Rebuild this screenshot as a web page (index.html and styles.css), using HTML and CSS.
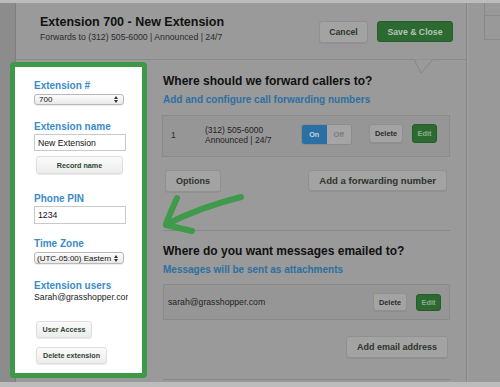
FILE: index.html
```html
<!DOCTYPE html>
<html>
<head>
<meta charset="utf-8">
<link rel="stylesheet" href="styles.css">
</head>
<body>
<div class="screen">
  <div class="gutter"></div>
  <div class="modal">
    <header class="modal-head">
      <div class="head-text">
        <h1>Extension 700 - New Extension</h1>
        <p>Forwards to (312) 505-6000 | Announced | 24/7</p>
      </div>
      <div class="head-actions">
        <button class="btn btn-gray btn-cancel">Cancel</button>
        <button class="btn btn-green btn-save">Save &amp; Close</button>
      </div>
      <svg class="notch" width="22" height="20" viewBox="0 0 22 20">
        <polygon points="0,4.5 7,18 20,4.5" fill="#9a9a9a"/>
        <polyline points="0,4.5 7,18 19,4.5" fill="none" stroke="#858585" stroke-width="1"/>
      </svg>
    </header>
    <div class="modal-body">
      <aside class="side">
        <label class="side-label">Extension #</label>
        <div class="select select-ext"><span>700</span><svg class="updown" width="4" height="7" viewBox="0 0 4 7"><path d="M0 3 L2 0 L4 3 Z M0 4 L2 7 L4 4 Z" fill="#333"/></svg></div>

        <label class="side-label gap16">Extension name</label>
        <input class="field" type="text" value="New Extension">
        <button class="sbtn sbtn-record">Record name</button>

        <label class="side-label gap19">Phone PIN</label>
        <input class="field field-pin" type="text" value="1234">

        <label class="side-label gap14">Time Zone</label>
        <div class="select select-tz"><span>(UTC-05:00) Eastern</span><svg class="updown" width="4" height="7" viewBox="0 0 4 7"><path d="M0 3 L2 0 L4 3 Z M0 4 L2 7 L4 4 Z" fill="#333"/></svg></div>

        <label class="side-label gap16">Extension users</label>
        <div class="side-user">Sarah@grasshopper.com</div>

        <button class="sbtn sbtn-access">User Access</button>
        <button class="sbtn sbtn-delete">Delete extension</button>
      </aside>

      <main class="content">
        <h2>Where should we forward callers to?</h2>
        <a class="sub">Add and configure call forwarding numbers</a>

        <div class="row-box fwd-row">
          <span class="idx">1</span>
          <div class="fwd-text">
            <div>(312) 505-6000</div>
            <div>Announced | 24/7</div>
          </div>
          <div class="toggle"><span class="on">On</span><span class="off">Off</span></div>
          <button class="btn btn-gray btn-del">Delete</button>
          <button class="btn btn-green btn-edit">Edit</button>
        </div>

        <div class="btn-row">
          <button class="btn btn-gray btn-lg btn-options">Options</button>
          <button class="btn btn-gray btn-lg btn-addfwd">Add a forwarding number</button>
        </div>

        <div class="section">
          <h2>Where do you want messages emailed to?</h2>
          <a class="sub">Messages will be sent as attachments</a>

          <div class="row-box email-row">
            <span class="email">sarah@grasshopper.com</span>
            <button class="btn btn-gray btn-del">Delete</button>
            <button class="btn btn-green btn-edit">Edit</button>
          </div>

          <div class="btn-row btn-row-end">
            <button class="btn btn-gray btn-lg btn-addmail">Add email address</button>
          </div>
        </div>
        <div class="bottom-line"></div>
      </main>

      <svg class="arrow" width="95" height="50" viewBox="0 0 95 50">
        <g fill="none" stroke="#3f9a4b" stroke-width="6" stroke-linecap="round" stroke-linejoin="round">
          <path d="M86 9 C66 14 36 24 12 36"/>
          <path d="M22 10 C18 19 14 28 11 36"/>
          <path d="M11 37 C19 39 29 41 37 43"/>
        </g>
      </svg>
    </div>
  </div>
  <div class="rail">
    <div class="rail-box"><div class="rail-cell"></div></div>
  </div>
</div>
</body>
</html>
```

FILE: styles.css
```css
* {
  box-sizing: border-box;
  margin: 0;
  padding: 0;
}

body {
  margin: 0;
  font-family: "Liberation Sans", Arial, sans-serif;
  background: #8c8c8c;
}

.screen {
  width: 500px;
  height: 387px;
  display: flex;
  border-top: 3px solid #bcbcbc;
  border-bottom: 5px solid #bcbcbc;
  background: #8c8c8c;
  overflow: hidden;
}

.gutter {
  width: 15px;
  flex: none;
  background: #8c8c8c;
}

.modal {
  width: 452px;
  flex: none;
  background: #9a9a9a;
  border-left: 1px solid #7e7e7e;
  border-right: 1px solid #868686;
  display: flex;
  flex-direction: column;
}

/* header */
.modal-head {
  position: relative;
  height: 57px;
  flex: none;
  border-bottom: 1px solid #8a8a8a;
  display: flex;
  justify-content: space-between;
  align-items: flex-start;
  padding: 12px 13px 0 24px;
}

.modal-head h1 {
  font-size: 12.5px;
  line-height: 15px;
  font-weight: bold;
  color: #111;
}

.modal-head p {
  margin-top: 2px;
  font-size: 8.7px;
  line-height: 11px;
  color: #2a2a2a;
}

.head-actions {
  display: flex;
  gap: 9px;
  margin-top: 6px;
}

.notch {
  position: absolute;
  left: 398px;
  top: 52px;
}

/* buttons */
.btn {
  font-family: "Liberation Sans", Arial, sans-serif;
  font-weight: bold;
  border-radius: 3px;
  border: 1px solid #909090;
  display: inline-flex;
  align-items: center;
  justify-content: center;
  flex: none;
}

.btn-gray {
  background: #a3a3a3;
  color: #2c362c;
  box-shadow: 0 1px 0 rgba(0, 0, 0, 0.06);
}

.btn-green {
  background: #2c6a31;
  border-color: #265c2a;
  color: #b4c6b4;
}

.btn-cancel {
  width: 49px;
  height: 22px;
  font-size: 8.7px;
}

.btn-save {
  width: 76px;
  height: 21px;
  font-size: 8.7px;
}

.btn-lg {
  height: 22px;
  font-size: 9px;
  padding: 0 10px;
}

.btn-addfwd {
  height: 21px;
  font-size: 9.6px;
  padding: 0 10px;
}

.btn-del {
  width: 34px;
  height: 19px;
  font-size: 7.3px;
  color: #2a2a2a;
}

.btn-edit {
  width: 25px;
  height: 19px;
  font-size: 7.3px;
  color: #8fae8f;
}

/* body */
.modal-body {
  flex: 1;
  display: flex;
  align-items: flex-start;
  position: relative;
}

.side {
  flex: none;
  margin: 2px 0 0 -6px;
  width: 137px;
  height: 316px;
  border: 5px solid #3d9848;
  border-radius: 4px;
  background: #fff;
  padding: 13px 0 0 19px;
  display: flex;
  flex-direction: column;
  align-items: flex-start;
}

.side-label {
  font-size: 10px;
  line-height: 12px;
  font-weight: bold;
  color: #3a8cc9;
}

.gap16 { margin-top: 16px; }
.gap19 { margin-top: 19px; }
.gap14 { margin-top: 14px; }

.select {
  margin-top: 2px;
  width: 90px;
  height: 11px;
  border: 1px solid #b8b8b8;
  border-radius: 3px;
  background: linear-gradient(#fcfcfc, #e9e9e9);
  display: flex;
  align-items: center;
  justify-content: space-between;
  padding: 0 5px 0 4px;
  font-size: 8px;
  color: #111;
  box-shadow: 0 1px 1px rgba(0, 0, 0, 0.08);
}

.select-tz {
  height: 12px;
  padding-left: 2px;
  overflow: hidden;
  white-space: nowrap;
}

.select-tz span {
  overflow: hidden;
  width: 78px;
}

.updown {
  flex: none;
}

.field {
  margin-top: 1px;
  width: 92px;
  height: 17px;
  border: 1px solid #c9c9c9;
  padding: 0 3px;
  font-family: "Liberation Sans", Arial, sans-serif;
  font-size: 8.7px;
  color: #111;
  background: #fff;
  outline: none;
}

.field-pin {
  height: 18px;
}

.sbtn {
  margin-left: 2px;
  font-family: "Liberation Sans", Arial, sans-serif;
  font-weight: bold;
  font-size: 7.2px;
  color: #2e472f;
  background: linear-gradient(#fbfbfb, #ececec);
  border: 1px solid #dedede;
  border-radius: 3px;
  box-shadow: 0 1px 1px rgba(0, 0, 0, 0.08);
  display: inline-flex;
  align-items: center;
  justify-content: center;
}

.sbtn-record {
  margin-top: 5px;
  width: 87px;
  height: 18px;
}

.sbtn-access {
  margin-top: 18px;
  width: 56px;
  height: 17px;
}

.sbtn-delete {
  margin-top: 9px;
  width: 71px;
  height: 17px;
}

.side-user {
  width: 94px;
  overflow: hidden;
  white-space: nowrap;
  font-size: 8.7px;
  line-height: 11px;
  color: #222;
}

/* content */
.content {
  flex: none;
  margin-left: 15px;
  width: 288px;
  padding-top: 14px;
  display: flex;
  flex-direction: column;
}

.content h2 {
  padding-left: 1px;
  font-size: 12px;
  line-height: 14px;
  font-weight: bold;
  color: #111;
}

.sub {
  display: block;
  margin-top: 6px;
  padding-left: 1px;
  font-size: 10px;
  line-height: 12px;
  font-weight: bold;
  color: #2d70a0;
}

.row-box {
  margin-top: 9px;
  background: #969696;
  border: 1px solid #8a8a8a;
  display: flex;
}

.fwd-row {
  height: 42px;
  padding: 8px 0 0 8px;
  align-items: flex-start;
}

.idx {
  width: 34px;
  margin-top: 6px;
  font-size: 8.5px;
  line-height: 10px;
  color: #2a2a2a;
}

.fwd-text {
  width: 96px;
  margin-top: 1px;
  font-size: 8.5px;
  line-height: 10px;
  color: #1e1e1e;
}

.toggle {
  display: flex;
  width: 51px;
  height: 21px;
  border: 1px solid #8c8c8c;
  border-radius: 3px;
  overflow: hidden;
  font-size: 7.3px;
  font-weight: bold;
}

.toggle span {
  flex: 1;
  display: flex;
  align-items: center;
  justify-content: center;
}

.toggle .on {
  background: #2b70a3;
  color: #c3d5e2;
}

.toggle .off {
  background: #a5a5a5;
  color: #7b7b7b;
}

.fwd-row .btn-del {
  margin-left: 17px;
}

.fwd-row .btn-edit {
  margin-left: 9px;
}

.btn-row {
  margin-top: 13px;
  display: flex;
  justify-content: space-between;
  padding: 0 3px;
}

.btn-row-end {
  margin-top: 16px;
  justify-content: flex-end;
  padding: 0 2px;
}

.section {
  margin-top: 38px;
  border-top: 1px solid #878787;
  padding-top: 13px;
  width: 287px;
  margin-left: 1px;
}

.section h2 {
  padding-left: 0;
}

.section .sub {
  padding-left: 0;
}

.email-row {
  margin-top: 8px;
  height: 36px;
  align-items: center;
  padding: 0 0 0 4px;
}

.email {
  flex: 1;
  font-size: 8.7px;
  color: #1e1e1e;
}

.email-row .btn-del {
  margin-top: 0;
  height: 18px;
}

.email-row .btn-edit {
  margin-left: 9px;
  margin-right: 8px;
  height: 17px;
}

.bottom-line {
  margin-top: 21px;
  margin-left: 1px;
  width: 287px;
  border-top: 1px solid #878787;
}

.arrow {
  position: absolute;
  left: 139px;
  top: 128px;
}

/* right rail */
.rail {
  flex: 1;
  background: #999;
  border-left: 1px solid #a2a2a2;
}

.rail-box {
  margin-left: 16px;
  height: 37px;
  border-left: 1px solid #888;
  border-bottom: 1px solid #8a8a8a;
  padding-top: 12px;
}

.rail-cell {
  border-top: 1px solid #8a8a8a;
}
```
